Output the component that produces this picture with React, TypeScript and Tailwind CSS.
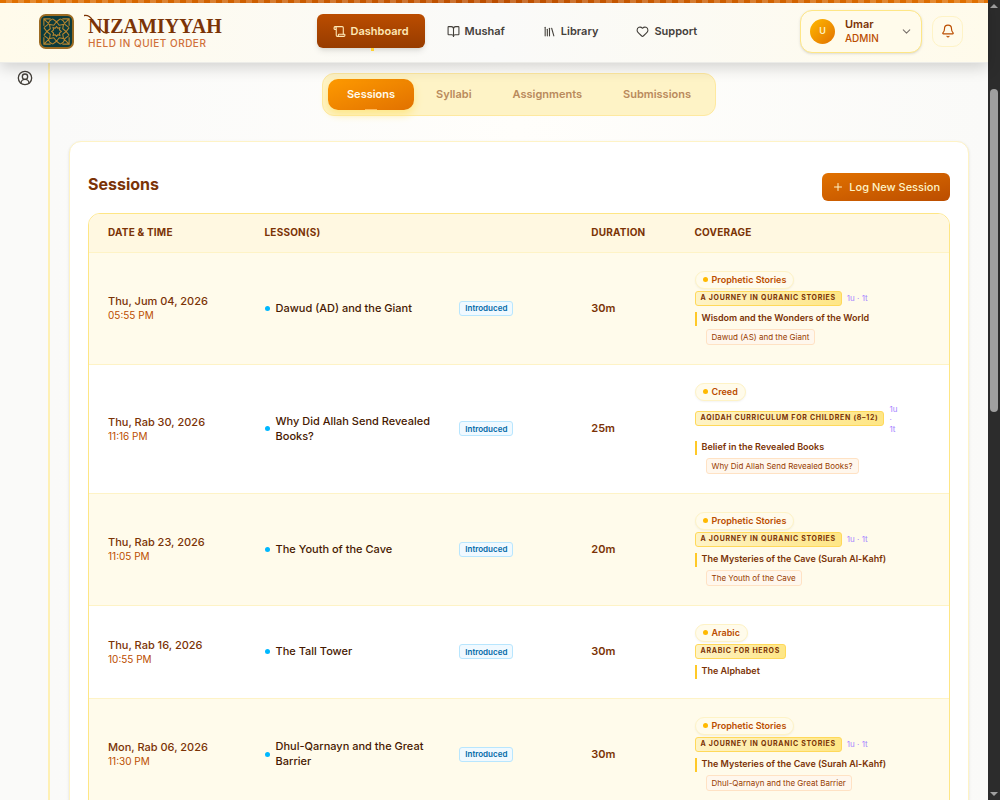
import React from 'react';
import { Bell, BookOpen, ChevronDown, CircleUserRound, Heart, Library, Plus, Scroll, type LucideIcon } from 'lucide-react';

type Session = {
  date: string;
  time: string;
  lesson: string;
  duration: string;
  subject: string;
  course: string;
  stats?: string;
  unit: string;
  topic?: string;
};

const sessions: Session[] = [
  { date: 'Thu, Jum 04, 2026', time: '05:55 PM', lesson: 'Dawud (AD) and the Giant', duration: '30m', subject: 'Prophetic Stories', course: 'A Journey in Quranic Stories', stats: '1u · 1t', unit: 'Wisdom and the Wonders of the World', topic: 'Dawud (AS) and the Giant' },
  { date: 'Thu, Rab 30, 2026', time: '11:16 PM', lesson: 'Why Did Allah Send Revealed Books?', duration: '25m', subject: 'Creed', course: 'Aqidah Curriculum for Children (8–12)', stats: '1u · 1t', unit: 'Belief in the Revealed Books', topic: 'Why Did Allah Send Revealed Books?' },
  { date: 'Thu, Rab 23, 2026', time: '11:05 PM', lesson: 'The Youth of the Cave', duration: '20m', subject: 'Prophetic Stories', course: 'A Journey in Quranic Stories', stats: '1u · 1t', unit: 'The Mysteries of the Cave (Surah Al-Kahf)', topic: 'The Youth of the Cave' },
  { date: 'Thu, Rab 16, 2026', time: '10:55 PM', lesson: 'The Tall Tower', duration: '30m', subject: 'Arabic', course: 'Arabic for Heros', unit: 'The Alphabet' },
  { date: 'Mon, Rab 06, 2026', time: '11:30 PM', lesson: 'Dhul-Qarnayn and the Great Barrier', duration: '30m', subject: 'Prophetic Stories', course: 'A Journey in Quranic Stories', stats: '1u · 1t', unit: 'The Mysteries of the Cave (Surah Al-Kahf)', topic: 'Dhul-Qarnayn and the Great Barrier' },
];

const navItems: { label: string; icon: LucideIcon }[] = [
  { label: 'Mushaf', icon: BookOpen },
  { label: 'Library', icon: Library },
  { label: 'Support', icon: Heart },
];

function Logo() {
  return (
    <svg viewBox="0 0 36 36" className="size-[35px]" aria-hidden="true">
      <rect x="1" y="1" width="34" height="34" rx="6" fill="#0c3b3c" stroke="#9c6b22" strokeWidth="2" />
      <g fill="none" stroke="#b8862f" strokeWidth="1.100">
        <path d="M18 8l2.800 3.600 4.400-.8-.8 4.400L28 18l-3.600 2.800.8 4.400-4.400-.8L18 28l-2.800-3.600-4.400.8.8-4.400L8 18l3.600-2.800-.8-4.400 4.400.8z" />
        <path d="M18 13l1.500 1.700 2-.7-.5 2.300 2 1.700-2 1.700.5 2.300-2-.7L18 23l-1.500-1.700-2 .7.500-2.300-2-1.700 2-1.700-.5-2.300 2 .7z" />
        <path d="M5 12V5h7M24 5h7v7M31 24v7h-7M12 31H5v-7M5 5l6 6M31 5l-6 6M31 31l-6-6M5 31l6-6M5 14l4-3 2-4 3-2M31 14l-4-3-2-4-3-2M5 22l4 3 2 4 3 2M31 22l-4 3-2 4-3 2M14 5l4 3 4-3M14 31l4-3 4 3M5 14l3 4-3 4M31 14l-3 4 3 4" />
      </g>
    </svg>
  );
}

function Header() {
  return (
    <header className="relative z-10 border-b border-[#ecece8] bg-linear-to-r from-[#fffbeb] via-[#fafaf9] to-[#fffbeb] shadow-[0_5px_14px_rgba(0,0,0,0.16)]">
      <div className="h-[3px] bg-[repeating-linear-gradient(90deg,transparent_0_6px,rgba(255,255,255,0.2)_6px_12px),linear-gradient(90deg,#e17100,#bb4d00,#e17100)]" />
      <div className="flex h-[59px] items-center justify-between pr-[25px] pb-[3px] pl-[39px]">
        <a href="#home" className="flex items-center gap-2.5 pr-2">
          <Logo />
          <span className="relative flex flex-col gap-px pt-0.5 pl-1">
            <svg viewBox="0 0 26 20" className="absolute top-0 left-0 h-5 w-[26px]" fill="none" stroke="#7b3306" strokeLinecap="round" aria-hidden="true">
              <path d="M0.500 1.500C4 1 6.500 3 8.500 6" strokeWidth="1.300" />
              <path d="M15 13c2 3.500 4 6 8 6" strokeWidth="1.300" />
            </svg>
            <span className="font-['Liberation_Serif',serif] text-xl leading-5 font-bold text-[#7b3306]">NIZAMIYYAH</span>
            <span className="text-[10px] leading-3 font-medium tracking-[0.5px] text-[#d0703a]">HELD IN QUIET ORDER</span>
          </span>
        </a>
        <nav className="flex items-center gap-1.5 text-[11px] font-semibold text-[#44403b]">
          <a href="#dashboard" className="relative flex h-[34px] items-center gap-[5px] rounded-md bg-linear-to-b from-[#bb4d00] to-[#973c00] px-4 text-[#fee8b5] shadow-md">
            <Scroll size={13} />
            Dashboard
            <span className="absolute top-full left-1/2 size-[3px] bg-[#ffd230]" />
          </a>
          {navItems.map(({ label, icon: Icon }) => (
            <a key={label} href={`#${label.toLowerCase()}`} className="flex h-[34px] items-center gap-[5px] px-4">
              <Icon size={13} />
              {label}
            </a>
          ))}
        </nav>
        <div className="flex items-center gap-2.5">
          <button type="button" className="flex h-[43px] w-[122px] items-center rounded-xl border border-[#fee685] bg-[#fffbeb] pr-2 pl-[9px] text-left shadow-sm">
            <span className="flex size-[25px] items-center justify-center rounded-full bg-linear-to-br from-[#ffb900] to-[#e17100] text-[9px] font-semibold text-[#fef3c6]">U</span>
            <span className="ml-2.5 flex flex-1 flex-col">
              <span className="text-[11px] leading-[14px] font-semibold text-[#7b3306]">Umar</span>
              <span className="text-[10px] leading-[14px] font-medium text-[#bb4d00]">ADMIN</span>
            </span>
            <ChevronDown size={13} className="text-[#79716b]" />
          </button>
          <button type="button" aria-label="Notifications" className="flex size-[31px] items-center justify-center rounded-[10px] border border-[#fef3c6] bg-[#fffbeb] text-[#bb4d00]">
            <Bell size={14} />
          </button>
        </div>
      </div>
    </header>
  );
}

function Tabs() {
  return (
    <div role="tablist" className="flex gap-[3px] rounded-xl border border-[#fee9a0] bg-[#fef3c6] p-[5px] text-[11px] font-semibold text-[#b98a5c]">
      <button type="button" role="tab" aria-selected="true" className="relative h-[31px] rounded-[10px] bg-linear-to-br from-[#fe9a00] to-[#e17100] px-[19px] text-[#fffbeb] shadow-[0_4px_8px_#fee685]">
        Sessions
        <span className="absolute bottom-0 left-1/2 h-px w-3 -translate-x-1/2 bg-[#ffb95a]" />
      </button>
      {['Syllabi', 'Assignments', 'Submissions'].map((tab) => (
        <button key={tab} type="button" role="tab" aria-selected="false" className="h-[31px] px-[19px]">
          {tab}
        </button>
      ))}
    </div>
  );
}

function Coverage({ session }: { session: Session }) {
  return (
    <div className="flex flex-col items-start">
      <span className="flex h-[18px] items-center gap-1 rounded-full border border-[#fef3c6] bg-[#fffbeb] px-[7px] text-[9px] font-semibold text-[#bb4d00] shadow-xs">
        <span className="size-[5px] rounded-full bg-[#ffb900]" />
        {session.subject}
      </span>
      <div className="mt-0.5 flex items-center gap-[5px]">
        <span className="flex h-[15px] items-center rounded-[3px] border border-[#ffd95a] bg-linear-to-r from-[#fef3c6] to-[#fee685] px-[5px] text-[7px] font-bold tracking-[0.7px] whitespace-nowrap text-[#7b3306] uppercase">
          {session.course}
        </span>
        {session.stats && <span className="py-px text-[8px] leading-[10px] text-[#a684ff]">{session.stats}</span>}
      </div>
      <span className="mt-1.5 flex h-3.5 items-center border-l-2 border-[#ffc928] pb-0.5 pl-[5px] text-[9px] font-semibold text-[#7b3306]">{session.unit}</span>
      {session.topic && (
        <span className="mt-[3px] ml-[11px] flex h-4 items-center rounded-[3px] border border-[#ffe2c4] bg-[#fff7ed] px-[5px] text-[8px] text-[#973c00]">{session.topic}</span>
      )}
    </div>
  );
}

function SessionsTable() {
  return (
    <div className="overflow-hidden rounded-xl border border-[#fee685]">
      <table className="w-full table-fixed border-collapse text-left">
        <colgroup>
          <col className="w-[18.2%]" />
          <col className="w-[38%]" />
          <col className="w-[12%]" />
          <col />
        </colgroup>
        <thead className="bg-[#fff8e1] text-[10px] text-[#7b3306]">
          <tr className="h-[38px] border-b border-[#fef3c6]">
            {['Date & Time', 'Lesson(s)', 'Duration', 'Coverage'].map((head) => (
              <th key={head} scope="col" className="px-[19px] font-bold tracking-[0.2px] uppercase">
                {head}
              </th>
            ))}
          </tr>
        </thead>
        <tbody>
          {sessions.map((session) => (
            <tr key={session.date} className="border-b border-[#fef3c6] odd:bg-[#fffbeb]">
              <td className="px-[19px]">
                <div className="text-[11px] leading-[15px] font-medium text-[#7b3306]">{session.date}</div>
                <div className="text-[10px] leading-[13px] text-[#bb4d00]">{session.time}</div>
              </td>
              <td className="px-[19px]">
                <div className="grid grid-cols-[1fr_94px] items-center gap-3">
                  <div className="flex items-center gap-1.5">
                    <span className="size-[5px] shrink-0 rounded-full bg-[#00b8ff]" />
                    <span className="text-[11px] leading-[15px] font-medium text-[#461901]">{session.lesson}</span>
                  </div>
                  <span className="flex h-[15px] items-center justify-self-start rounded-[3px] border border-[#b8e6fe] bg-[#f0f9ff] px-[5px] text-[8px] font-semibold text-[#0069a8]">
                    Introduced
                  </span>
                </div>
              </td>
              <td className="px-[19px] text-[11px] font-semibold text-[#7b3306]">{session.duration}</td>
              <td className="pt-[18px] pr-[54px] pb-[19px] pl-[19px]">
                <Coverage session={session} />
              </td>
            </tr>
          ))}
        </tbody>
      </table>
    </div>
  );
}

export default function App() {
  return (
    <div className="flex h-screen overflow-hidden bg-[#fafaf9] font-[Inter,sans-serif]">
      <div className="flex min-w-0 flex-1 flex-col">
        <Header />
        <div className="flex min-h-0 flex-1">
          <aside className="flex w-[50px] shrink-0 justify-center border-r-2 border-[#fef0b5] pt-[7px] pl-0.5">
            <a href="#account" aria-label="Account" className="h-4 text-[#44403b]">
              <CircleUserRound size={16} />
            </a>
          </aside>
          <main className="flex min-w-0 flex-1 flex-col overflow-hidden bg-linear-to-r from-[#fafaf9] via-[#fffefb] to-[#fafaf8] px-[19px] pt-2.5">
            <div className="flex shrink-0 justify-center">
              <Tabs />
            </div>
            <section className="mt-[25px] shrink-0 rounded-xl border border-[#fef3c6] bg-white p-[18px] pt-[31px] shadow-sm">
              <div className="mb-3 flex items-start justify-between">
                <h1 className="text-base leading-[22px] font-bold text-[#7b3306]">Sessions</h1>
                <button type="button" className="flex h-7 items-center gap-[5px] rounded-md bg-linear-to-br from-[#e17100] to-[#bb4d00] px-2.5 text-[11px] font-medium text-[#fef3c6]">
                  <Plus size={12} />
                  Log New Session
                </button>
              </div>
              <SessionsTable />
            </section>
          </main>
        </div>
      </div>
      <div aria-hidden="true" className="flex w-3 shrink-0 flex-col items-center justify-between bg-[#2c2c2c] py-1">
        <span className="border-x-4 border-b-4 border-x-transparent border-b-[#9f9f9f]" />
        <div className="flex w-full flex-1 flex-col items-center">
          <span className="basis-[10.300%]" />
          <span className="w-2 basis-[41.200%] rounded-full bg-[#9f9f9f]" />
        </div>
        <span className="border-x-4 border-t-4 border-x-transparent border-t-[#9f9f9f]" />
      </div>
    </div>
  );
}
